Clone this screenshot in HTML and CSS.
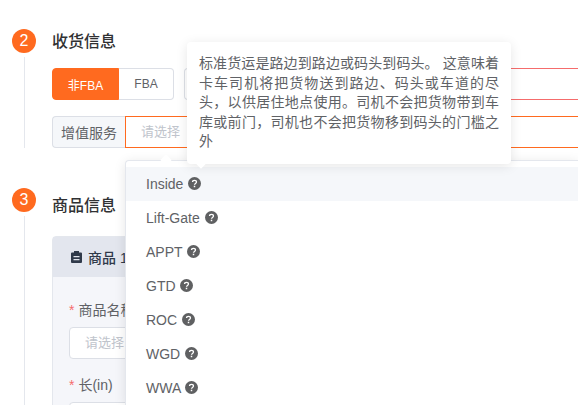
FILE: index.html
```html
<!DOCTYPE html>
<html lang="zh-CN">

<head>
    <meta charset="UTF-8">
    <title>收货信息</title>
    <link rel="stylesheet" href="styles.css">
</head>

<body>
    <svg class="defs" width="0" height="0">
        <symbol id="help" viewBox="0 0 14 14">
            <circle cx="7" cy="7" r="7" fill="#5f6062"></circle>
            <path d="M4.9 5.500c0-1.200.9-1.900 2.100-1.900s2.100.7 2.100 1.800c0 1.500-2.100 1.500-2.100 3" fill="none" stroke="#fff" stroke-width="1.400"></path>
            <rect x="6.200" y="9.400" width="1.600" height="1.600" fill="#fff"></rect>
        </symbol>
    </svg>

    <section class="steps">
        <!-- 收货信息 -->
        <section class="step step-address">
            <div class="step-side">
                <span class="step-num">2</span>
                <span class="step-line"></span>
            </div>
            <div class="step-main">
                <h3 class="step-title">收货信息</h3>
                <div class="type-row">
                    <div class="btn-group">
                        <button class="btn btn-active">非FBA</button>
                        <button class="btn">FBA</button>
                    </div>
                    <div class="address-group">
                        <span class="address-prepend"></span>
                        <span class="address-input"></span>
                    </div>
                </div>
                <div class="service-row">
                    <span class="service-label">增值服务</span>
                    <span class="service-input">请选择</span>
                </div>
            </div>
        </section>

        <!-- 商品信息 -->
        <section class="step step-goods">
            <div class="step-side">
                <span class="step-num">3</span>
                <span class="step-line"></span>
            </div>
            <div class="step-main">
                <h3 class="step-title">商品信息</h3>
                <div class="goods-card">
                    <div class="goods-head">
                        <svg class="order-icon" viewBox="0 0 11 12">
                            <path d="M1 1.500h2V0h5v1.500h2a1 1 0 0 1 1 1V11a1 1 0 0 1-1 1H1a1 1 0 0 1-1-1V2.500a1 1 0 0 1 1-1z" fill="#303a4a"></path>
                            <path d="M2.500 5h6v1.200h-6zM2.500 8h6v1.200h-6z" fill="#e2e5ed"></path>
                        </svg>
                        <span>商品 1</span>
                    </div>
                    <div class="goods-body">
                        <label class="field-label"><i>*</i>商品名称</label>
                        <div class="field-input">请选择</div>
                        <label class="field-label"><i>*</i>长(in)</label>
                        <div class="field-input"></div>
                    </div>
                </div>
            </div>
        </section>
    </section>

    <!-- 增值服务下拉 -->
    <div class="dropdown">
        <span class="arrow dropdown-arrow"></span>
        <ul class="dropdown-list">
            <li class="hover">Inside <svg class="help"><use href="#help"></use></svg></li>
            <li>Lift-Gate <svg class="help"><use href="#help"></use></svg></li>
            <li>APPT <svg class="help"><use href="#help"></use></svg></li>
            <li>GTD <svg class="help"><use href="#help"></use></svg></li>
            <li>ROC <svg class="help"><use href="#help"></use></svg></li>
            <li>WGD <svg class="help"><use href="#help"></use></svg></li>
            <li>WWA <svg class="help"><use href="#help"></use></svg></li>
        </ul>
    </div>

    <div class="tooltip">
        标准货运是路边到路边或码头到码头。 这意味着卡车司机将把货物送到路边、码头或车道的尽头，以供居住地点使用。司机不会把货物带到车库或前门，司机也不会把货物移到码头的门槛之外
        <span class="arrow tooltip-arrow"></span>
    </div>
</body>

</html>
```

FILE: styles.css
```css
html,
body {
    height: 405px;
    margin: 0;
    overflow: hidden;
    background: #fff;
}

body {
    position: relative;
    width: 578px;
    font-family: "Liberation Sans", "Noto Sans CJK SC", sans-serif;
    font-size: 14px;
    color: #606266;
}

.defs {
    position: absolute;
}

.steps {
    height: 376px;
    padding: 29px 0 0 12px;
    overflow: hidden;
}

.step {
    display: flex;
}

.step-address {
    height: 119px;
    margin-bottom: 40px;
}

.step-goods {
    height: 217px;
    overflow: hidden;
}

.step-side {
    display: flex;
    flex-direction: column;
    align-items: center;
    width: 24px;
    flex: none;
}

.step-num {
    width: 24px;
    height: 24px;
    line-height: 23px;
    border-radius: 50%;
    background: #ff6a1f;
    color: #fff;
    text-align: center;
    font-size: 16px;
    flex: none;
}

.step-line {
    flex: 1;
    width: 1px;
    margin-top: 4px;
    background: #e4e7ed;
}

.step-main {
    flex: 1;
    min-width: 0;
    margin-left: 16px;
}

.step-title {
    margin: 0;
    font-size: 16px;
    font-weight: 500;
    line-height: 26px;
    color: #303133;
}

.step-goods .step-title {
    margin-top: 5px;
}

.type-row {
    display: flex;
    gap: 10px;
    margin-top: 13px;
    height: 32px;
}

.btn-group {
    display: flex;
    flex: none;
}

.btn {
    height: 32px;
    padding: 0;
    border: 1px solid #dcdfe6;
    background: #fff;
    color: #606266;
    font: inherit;
    font-size: 12px;
}

.btn-active {
    width: 67px;
    border-color: #ff6a1f;
    border-radius: 4px 0 0 4px;
    background: #ff6a1f;
    color: #fff;
}

.btn:last-child {
    width: 55px;
    border-left: 0;
    border-radius: 0 4px 4px 0;
}

.address-group {
    display: flex;
    flex: 1;
    margin-right: -20px;
}

.address-prepend {
    width: 60px;
    border: 1px solid #dcdfe6;
    border-right: 0;
    border-radius: 4px 0 0 4px;
}

.address-input {
    flex: 1;
    border: 1px solid #f56c6c;
}

.service-row {
    display: flex;
    height: 32px;
    margin-top: 16px;
    margin-right: -20px;
}

.service-label {
    width: 73px;
    box-sizing: border-box;
    border: 1px solid #dcdfe6;
    border-right: 0;
    border-radius: 4px 0 0 4px;
    background: #f5f7fa;
    text-align: center;
    line-height: 32px;
}

.service-input {
    flex: 1;
    padding-left: 15px;
    border: 1px solid #ff6a1f;
    color: #c0c4cc;
    font-size: 13px;
    line-height: 29px;
}

.goods-card {
    margin-top: 17px;
    margin-right: -20px;
    border: 1px solid #e4e7ed;
    border-radius: 4px 0 0 0;
    background: #f5f6fa;
}

.goods-head {
    display: flex;
    align-items: center;
    height: 40px;
    padding-left: 18px;
    background: #e3e6ee;
    color: #303a4a;
    font-weight: 500;
    font-size: 14px;
}

.order-icon {
    width: 11px;
    height: 12px;
    margin-right: 6px;
}

.goods-body {
    padding: 23px 16px 0;
}

.field-label {
    display: block;
    line-height: 20px;
    margin-bottom: 7px;
}

.field-label i {
    margin-right: 4px;
    font-style: normal;
    color: #f56c6c;
}

.field-input {
    box-sizing: border-box;
    height: 32px;
    margin-bottom: 16px;
    padding-left: 15px;
    border: 1px solid #dcdfe6;
    border-radius: 4px;
    background: #fff;
    color: #c0c4cc;
    font-size: 13px;
    line-height: 30px;
}

.dropdown {
    position: absolute;
    left: 125px;
    top: 160px;
    width: 453px;
    height: 245px;
    box-sizing: border-box;
    padding-top: 6px;
    border: 1px solid #e4e7ed;
    border-right: 0;
    border-bottom: 0;
    border-radius: 4px 0 0 0;
    background: #fff;
    box-shadow: 0 2px 12px rgba(0, 0, 0, .1);
}

.arrow {
    position: absolute;
    width: 8px;
    height: 8px;
    background: #fff;
    transform: rotate(45deg);
}

.dropdown-arrow {
    left: 36px;
    top: -5px;
}

.dropdown-list {
    margin: 0;
    padding: 0;
    list-style: none;
}

.dropdown-list li {
    height: 34px;
    padding-left: 20px;
    line-height: 34px;
    color: #606266;
}

.dropdown-list .hover {
    background: #f5f7fa;
}

.help {
    width: 13px;
    height: 13px;
    margin-left: 1px;
    vertical-align: -1px;
}

.tooltip {
    position: absolute;
    left: 187px;
    top: 42px;
    width: 300px;
    padding: 12px;
    border-radius: 4px;
    background: #fff;
    box-shadow: 0 2px 12px rgba(0, 0, 0, .1);
    line-height: 1.4;
    text-align: justify;
}

.tooltip-arrow {
    left: 10px;
    bottom: -3px;
}
```
